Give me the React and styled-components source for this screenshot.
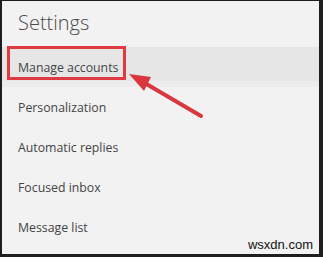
import React from "react";
import styled, { createGlobalStyle } from "styled-components";

const GlobalStyle = createGlobalStyle`
  html, body {
    margin: 0;
    padding: 0;
    background: #1e1e1e;
  }
  * {
    box-sizing: border-box;
  }
`;

const items = [
  "Manage accounts",
  "Personalization",
  "Automatic replies",
  "Focused inbox",
  "Message list",
];

const App = () => {
  return (
    <>
      <GlobalStyle />
      <Frame>
        <Title>Settings</Title>
        <List>
          {items.map((label, i) => (
            <Row key={label} active={i === 0}>
              {label}
              {i === 0 && <Callout />}
            </Row>
          ))}
        </List>
        <Arrow width="323" height="257" viewBox="0 0 323 257">
          <line
            x1="201"
            y1="116"
            x2="143"
            y2="82"
            stroke="#d9363e"
            strokeWidth="4"
            strokeLinecap="round"
          />
          <polygon points="129,74 151,77 144,91" fill="#d9363e" />
        </Arrow>
        <Watermark>wsxdn.com</Watermark>
      </Frame>
    </>
  );
};

const Frame = styled.div`
  position: relative;
  width: 323px;
  height: 257px;
  overflow: hidden;
  background: #f2f2f2;
  border-left: 2px solid #1e1e1e;
  border-top: 1px solid #1e1e1e;
  border-right: 4px solid #1e1e1e;
  border-bottom: 3px solid #1e1e1e;
  font-family: "Open Sans", "Noto Sans", sans-serif;
`;

const Title = styled.h1`
  margin: 0;
  height: 46px;
  padding: 8px 0 0 16px;
  font-size: 20px;
  font-weight: 300;
  line-height: 28px;
  color: #4a4a4a;
`;

const List = styled.div`
  display: flex;
  flex-direction: column;
`;

const Row = styled.div`
  position: relative;
  display: flex;
  align-items: center;
  height: 40px;
  padding-left: 16px;
  font-size: 12.3px;
  color: #444;
  background: ${(p) =>
    p.active ? "linear-gradient(#e6e6e6 0, #e6e6e6 34px, #ececec 34px)" : "transparent"};
`;

const Callout = styled.span`
  position: absolute;
  left: 5px;
  top: -1px;
  width: 119px;
  height: 34px;
  border: 3px solid #de3a40;
`;

const Arrow = styled.svg`
  position: absolute;
  left: -2px;
  top: -1px;
  pointer-events: none;
`;

const Watermark = styled.div`
  position: absolute;
  right: 6px;
  bottom: 2px;
  font-family: "Liberation Sans", Arial, sans-serif;
  font-size: 13px;
  color: #111;
`;

export default App;
